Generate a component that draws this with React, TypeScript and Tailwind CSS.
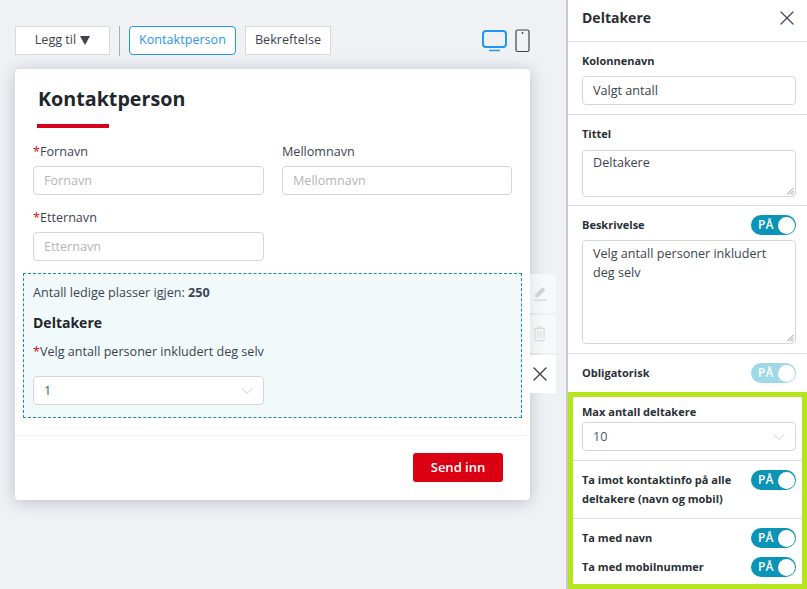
import { ChevronDown, X } from "lucide-react";

// toggle pill used in the right panel
function Toggle({ faded }: { faded?: boolean }) {
  return (
    <div
      className={`flex h-5 w-[45px] shrink-0 items-center justify-between rounded-full pl-[7px] pr-px ${
        faded ? "bg-[#9fd8e6]" : "bg-[#0a94b5]"
      }`}
    >
      <span className="text-xs font-semibold leading-none text-white">PÅ</span>
      <span className="h-[17px] w-[17px] rounded-full bg-white" />
    </div>
  );
}

function Required() {
  return <span className="text-[#e3000f]">*</span>;
}

function Field({ placeholder }: { placeholder: string }) {
  return (
    <div className="flex h-[29px] items-center rounded border border-[#d5d6d8] bg-white px-[10px] pt-px text-[#b3b5b8]">
      {placeholder}
    </div>
  );
}

function Select({ value }: { value: string }) {
  return (
    <div className="flex h-[29px] items-center justify-between rounded border border-[#d5d6d8] bg-white pl-[10px] pr-[6px] text-[#4a5568]">
      <span className="pt-px">{value}</span>
      <ChevronDown className="h-5 w-5 text-[#c2c4c7]" strokeWidth={1} />
    </div>
  );
}

function Grip() {
  return (
    <svg className="absolute bottom-px right-px h-2 w-2 text-[#777]" viewBox="0 0 8 8" fill="none" stroke="currentColor" strokeWidth="0.8">
      <path d="M7.5 1 1 7.5M7.5 4 4 7.5M7.5 6.5 6.5 7.5" />
    </svg>
  );
}

function PanelLabel({ children }: { children: React.ReactNode }) {
  return <div className="text-[11px] font-bold leading-4 text-[#2a2f36]">{children}</div>;
}

export default function App() {
  return (
    <div
      className="flex h-[589px] w-[807px] overflow-hidden bg-[#eff1f5] text-[12.6px] text-[#3c4450]"
      style={{ fontFamily: '"Open Sans", sans-serif' }}
    >
      {/* Editor area */}
      <div className="w-[566px] shrink-0 pl-[15px] pt-[26px]">
        <div className="flex h-[29px] w-[515px] items-center">
          <button className="flex h-[29px] w-[95px] shrink-0 items-center justify-center gap-1 border border-[#d9dade] bg-white text-[#3c4450]">
            Legg til
            <span className="h-0 w-0 border-x-[5px] border-t-[9px] border-x-transparent border-t-[#3c4450]" />
          </button>
          <div className="mx-[9px] h-[30px] w-px shrink-0 bg-[#a9abae]" />
          <button className="h-[29px] w-[107px] shrink-0 rounded-sm border border-[#2196f3] bg-white pb-px text-[#2b95f0]">
            Kontaktperson
          </button>
          <button className="ml-[9px] h-[29px] w-[86px] shrink-0 border border-[#d9dade] bg-white pb-px text-[#3c4450]">
            Bekreftelse
          </button>
          <svg className="ml-[151px] h-[24px] w-[25px] shrink-0 text-[#2196f3]" viewBox="0 0 25 24" fill="none" stroke="currentColor">
            <rect x="1" y="2" width="23" height="16" rx="3" strokeWidth="2" />
            <path d="M7 21.5h11" strokeWidth="1.5" />
          </svg>
          <svg className="ml-2 h-[24px] w-[15px] shrink-0 text-[#3c4450]" viewBox="0 0 15 24" fill="none" stroke="currentColor">
            <rect x="1" y="1" width="13" height="21.5" rx="1.5" strokeWidth="1.2" />
            <circle cx="7.5" cy="4" r="0.9" fill="currentColor" stroke="none" />
          </svg>
        </div>

        {/* Form card */}
        <div className="relative mt-[14px] h-[431px] w-[515px] rounded bg-white shadow-[0_2px_16px_rgba(60,65,80,0.28)]">
          <div className="px-[18px]">
            <h1 className="pl-[5px] pt-[15px] text-[19.7px] font-bold leading-[30px] text-[#22262b]">Kontaktperson</h1>
            <div className="ml-[4px] mt-[10px] h-1 w-[72px] bg-[#d6001c]" />
            <div className="mt-[14px] grid grid-cols-[231px_230px] gap-x-[18px]">
              <div>
                <div className="mb-[5px] pt-px leading-[18px]">
                  <Required />
                  Fornavn
                </div>
                <Field placeholder="Fornavn" />
              </div>
              <div>
                <div className="mb-[5px] pt-px leading-[18px]">Mellomnavn</div>
                <Field placeholder="Mellomnavn" />
              </div>
              <div className="mt-[13px]">
                <div className="mb-[5px] pt-px leading-[18px]">
                  <Required />
                  Etternavn
                </div>
                <Field placeholder="Etternavn" />
              </div>
            </div>
          </div>

          {/* Selected block */}
          <div className="relative ml-2 mt-3 h-[145px] w-[499px] border border-dashed border-[#1b8ba5] bg-[#f1f9fb] px-[9px] pt-[10px]">
            <div className="leading-[18px]">
              Antall ledige plasser igjen: <b>250</b>
            </div>
            <div className="mt-[11px] text-sm font-bold leading-5 text-[#22262b]">Deltakere</div>
            <div className="mt-[10px] leading-[18px]">
              <Required />
              Velg antall personer inkludert deg selv
            </div>
            <div className="mt-[15px] w-[231px]">
              <Select value="1" />
            </div>
            <div className="absolute left-[499px] top-0 flex w-[33px] flex-col gap-0.5">
              <div className="flex h-[39px] items-center justify-center bg-white/50 text-[#cfd0d3]">
                <svg className="h-[16px] w-[14px]" viewBox="0 0 14 16" fill="currentColor">
                  <path d="M9.5 1.2 12.3 4 5 11.2H2.2V8.5z" />
                  <rect x="0.5" y="13.6" width="13" height="1.2" />
                </svg>
              </div>
              <div className="flex h-[38px] items-center justify-center bg-white/50 text-[#d5d6d9]">
                <svg className="h-[16px] w-[13px]" viewBox="0 0 13 16" fill="none" stroke="currentColor">
                  <path d="M1 2.5h11M4.5 2.5V1h4v1.5M2 2.5v12.2h9V2.5M5 5v7M8 5v7" strokeWidth="1" />
                </svg>
              </div>
              <div className="flex h-[38px] items-center justify-center bg-white text-[#3c4450]">
                <X className="h-6 w-6" strokeWidth={1.4} />
              </div>
            </div>
          </div>

          <div className="mt-[17px] flex justify-end border-t border-[#f4f5f6] pr-[27px] pt-[17px]">
            <button className="h-[29px] w-[90px] rounded-[3px] bg-[#da0011] text-[13px] font-semibold text-white">
              Send inn
            </button>
          </div>
        </div>
      </div>

      {/* Settings panel */}
      <div className="h-full w-[241px] shrink-0 border-l-2 border-[#c9cbd1] bg-white">
        <div className="flex h-[42px] items-center justify-between border-b border-[#dcdde0] pb-[6px] pl-[14px] pr-2">
          <span className="text-sm font-bold text-[#2a2f36]">Deltakere</span>
          <X className="h-6 w-6 text-[#3c4450]" strokeWidth={1.2} />
        </div>

        <div className="h-[73px] border-b border-[#dcdde0] pl-[14px] pr-[11px] pt-[11px]">
          <PanelLabel>Kolonnenavn</PanelLabel>
          <div className="mt-[7px] flex h-[29px] w-[214px] items-center rounded border border-[#d5d6d8] px-[10px] pt-px">Valgt antall</div>
        </div>

        <div className="h-[91px] border-b border-[#dcdde0] pl-[14px] pr-[11px] pt-[11px]">
          <PanelLabel>Tittel</PanelLabel>
          <div className="relative mt-[8px] h-[47px] w-[214px] rounded border border-[#d5d6d8] px-[10px] pt-[3px]">
            Deltakere
            <Grip />
          </div>
        </div>

        <div className="h-[148px] border-b border-[#dcdde0] pl-[14px] pr-[11px] pt-[9px]">
          <div className="flex items-center justify-between">
            <PanelLabel>Beskrivelse</PanelLabel>
            <Toggle />
          </div>
          <div className="relative mt-[5px] h-[104px] w-[214px] rounded border border-[#d5d6d8] px-[10px] pt-[3px] leading-[19px]">
            Velg antall personer inkludert deg selv
            <Grip />
          </div>
        </div>

        <div className="flex h-[38px] items-start pl-[14px] pr-[11px] pt-[9px]">
          <div className="flex w-full items-center justify-between">
            <PanelLabel>Obligatorisk</PanelLabel>
            <Toggle faded />
          </div>
        </div>

        {/* Highlighted group */}
        <div className="h-[197px] border-[5px] border-[#b5e61d]">
          <div className="h-[64px] border-b border-[#dcdde0] pl-[9px] pt-[7px]">
            <PanelLabel>Max antall deltakere</PanelLabel>
            <div className="mt-[2px] w-[214px]">
              <Select value="10" />
            </div>
          </div>
          <div className="flex h-[58px] justify-between border-b border-[#dcdde0] pl-[9px] pr-[6px] pt-[9px]">
            <div className="w-[165px] text-[11px] font-bold leading-[19px] text-[#2a2f36]">
              Ta imot kontaktinfo på alle deltakere (navn og mobil)
            </div>
            <Toggle />
          </div>
          <div className="flex flex-col gap-[9px] pl-[9px] pr-[6px] pt-[9px]">
            <div className="flex items-center justify-between">
              <PanelLabel>Ta med navn</PanelLabel>
              <Toggle />
            </div>
            <div className="flex items-center justify-between">
              <PanelLabel>Ta med mobilnummer</PanelLabel>
              <Toggle />
            </div>
          </div>
        </div>
      </div>
    </div>
  );
}
